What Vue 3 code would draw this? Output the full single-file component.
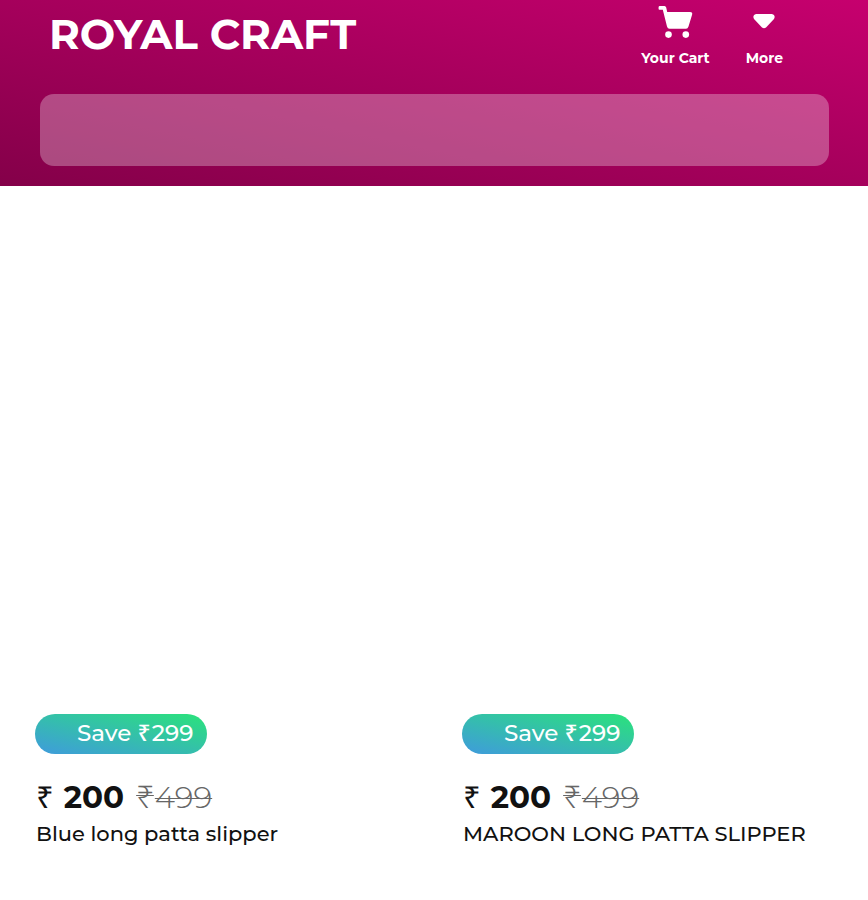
<script setup>
const products = [
  { name: 'Blue long patta slipper', price: 200, mrp: 499 },
  { name: 'MAROON LONG PATTA SLIPPER', price: 200, mrp: 499 },
]
</script>

<template>
  <div class="page">
    <header class="header">
      <div class="bar">
        <h1 class="brand">ROYAL CRAFT</h1>
        <nav class="actions">
          <a class="action" href="#cart">
            <svg class="icon" viewBox="0 0 36 36" aria-hidden="true">
              <path d="M2.500 2H7.500Q8.800 2 9.200 3.500L10.200 8H33Q36 8 35 11L31.500 22.500Q30.800 24.800 29 24.800H12.500Q10.600 24.800 10 22.500L5.800 5.800H2.500Q1.500 5.800 1.500 3.900T2.500 2Z" fill="currentColor" />
              <circle cx="11.500" cy="30.600" r="3.300" fill="currentColor" />
              <circle cx="28.800" cy="30.600" r="3.300" fill="currentColor" />
            </svg>
            <span>Your Cart</span>
          </a>
          <a class="action" href="#more">
            <svg class="icon" viewBox="0 0 36 36" aria-hidden="true">
              <path d="M10 10h16q4 1 2 5l-8 8.500q-2 1.500-4 0l-8-8.500q-2-4 2-5z" fill="currentColor" />
            </svg>
            <span>More</span>
          </a>
        </nav>
      </div>
      <input class="search" type="search" aria-label="Search" />
    </header>
    <main class="products">
      <article v-for="p in products" :key="p.name" class="product">
        <div class="photo"></div>
        <span class="badge">Save <span class="rupee">₹</span>{{ p.mrp - p.price }}</span>
        <div class="details">
          <p class="prices">
            <span class="price"><span class="rupee">₹</span><strong>{{ p.price }}</strong></span>
            <s><span class="rupee">₹</span>{{ p.mrp }}</s>
          </p>
          <h2 class="name">{{ p.name }}</h2>
        </div>
      </article>
    </main>
  </div>
</template>

<style>
body { margin: 0; background: #fff; }
</style>

<style scoped>
.page { font-family: Montserrat, Inter, "Open Sans", sans-serif; color: #111; }
.header { box-sizing: border-box; padding: 4px 39px 20px 40px; background: linear-gradient(to top right, #840049, #c6006e); }
.bar { display: flex; justify-content: space-between; height: 90px; }
.brand { margin: 4px 0 0 9px; color: #fff; font-size: 42px; line-height: 52px; font-weight: 700; }
.actions { display: flex; gap: 36px; margin-right: 46px; }
.action { display: flex; flex-direction: column; align-items: center; gap: 8px; color: #fff; text-decoration: none; font-size: 14px; line-height: 20px; font-weight: 700; }
.icon { width: 36px; height: 36px; }
.search { display: block; box-sizing: border-box; width: 100%; height: 72px; padding: 0 24px; border: 0; border-radius: 14px; background: rgba(255, 255, 255, 0.29); color: #fff; font: inherit; font-size: 22px; }
.products { display: grid; grid-template-columns: 1fr 1fr; padding-right: 14px; }
.product { min-width: 0; padding: 0 20px 50px 35px; }
.photo { height: 528px; }
.rupee { padding-right: 1px; font-family: "Noto Sans", "Open Sans", sans-serif; line-height: 1; }
.badge { display: block; box-sizing: border-box; width: 172px; height: 40px; padding-left: 42px; border-radius: 20px; background: linear-gradient(to top right, #3f9bdc, #2ae37a); color: #fff; font-size: 23px; line-height: 38px; font-weight: 500; white-space: nowrap; }
.details { padding: 24px 0 0 1px; }
.prices { display: flex; gap: 12px; margin: 0; font-size: 31px; line-height: 38px; white-space: nowrap; }
.price { display: flex; gap: 9px; align-items: baseline; }
.prices s { color: #666; font-weight: 300; text-decoration-thickness: 1px; }
.name { margin: 6px 0 0; font-size: 21px; line-height: 24px; font-weight: 500; white-space: nowrap; }
</style>
